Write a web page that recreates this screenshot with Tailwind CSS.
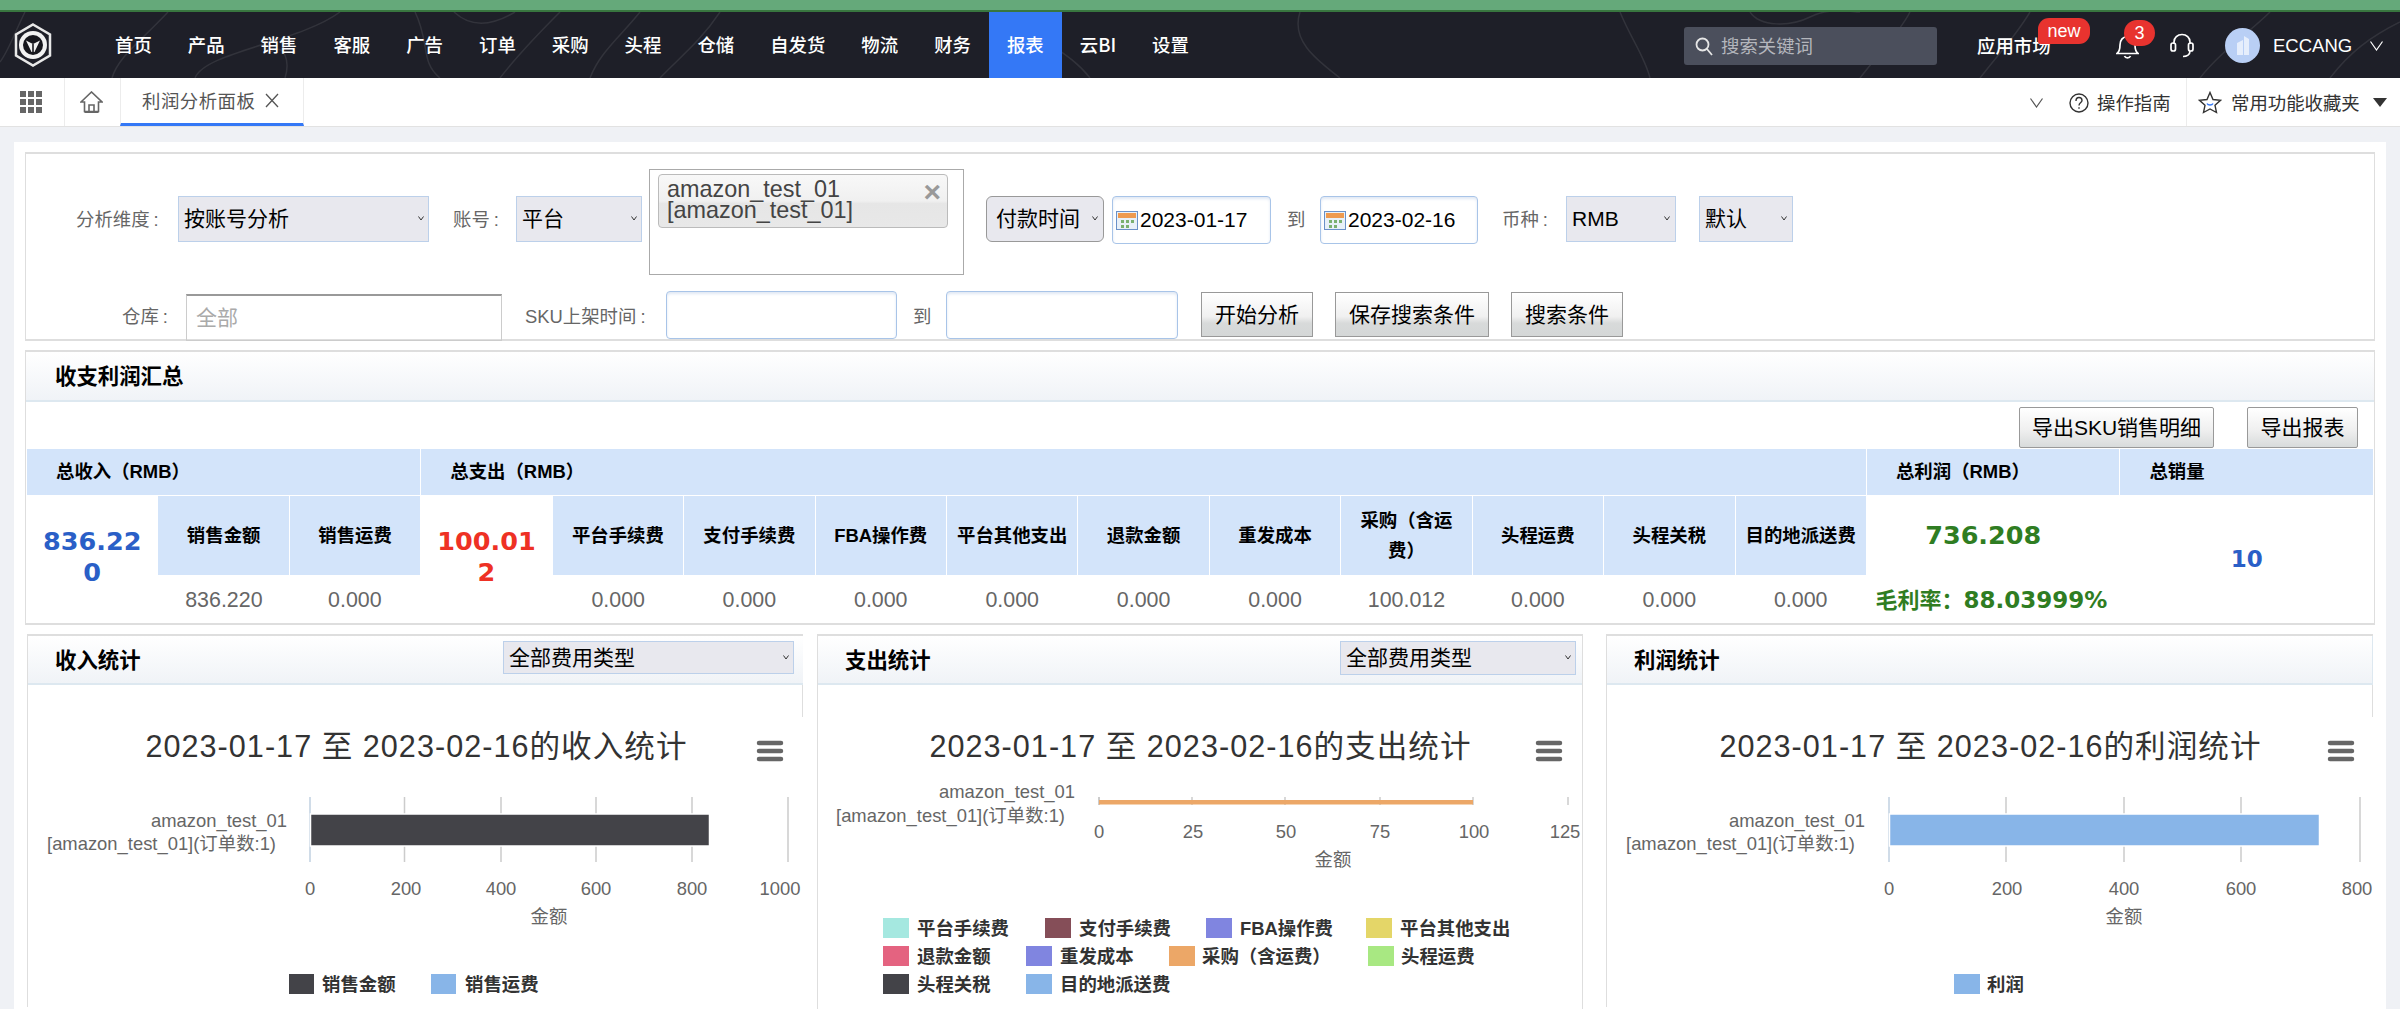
<!DOCTYPE html>
<html lang="zh-CN">
<head>
<meta charset="UTF-8">
<title>利润分析面板</title>
<script src="https://cdn.jsdelivr.net/npm/@tailwindcss/browser@4"></script>
</head>
<body class="w-[2400px] h-[1009px] overflow-hidden bg-[#eff1f5] text-[18.4px] font-['Liberation_Sans','Noto_Sans_CJK_SC',sans-serif]">

<!-- top strip -->
<div class="h-[10px] bg-[#65a97a]"></div>
<div class="h-[2px] bg-[#38763f]"></div>

<!-- main nav -->
<nav class="relative h-[66px] bg-[#1e1f28] flex items-center text-white font-['Noto_Sans_CJK_SC',sans-serif]">
  <svg class="absolute inset-0" width="2400" height="66" fill="none" stroke="#ffffff" stroke-opacity="0.09" stroke-width="1.5">
    <path d="M25 0C15 20 8 40 0 50M168 0C140 30 118 45 112 66M340 0C300 30 205 40 195 66"/>
    <path d="M454 0C470 15 490 15 515 0M560 0C540 20 520 40 500 66M285 66C290 50 285 30 270 40"/>
    <path d="M640 0C620 25 600 40 590 66M720 0C700 30 680 45 660 66M415 0C430 30 420 50 440 66"/>
    <path d="M1010 0C1040 30 1070 40 1090 66M1300 0C1290 30 1320 50 1340 66"/>
    <path d="M1620 0C1630 25 1645 45 1650 66M1750 0C1760 15 1790 15 1810 5C1830 -5 1850 0 1860 0M1860 66C1880 40 1900 20 1910 0M1980 66C2000 40 2015 25 2030 0"/>
    <path d="M2200 66C2220 40 2250 20 2270 0M2330 66C2350 40 2370 25 2400 10"/>
  </svg>
  <svg class="relative ml-[14px] shrink-0" width="38" height="44" viewBox="0 0 38 44">
    <path d="M19 1.5L36 11.5V32.5L19 42.5L2 32.5V11.5Z" fill="none" stroke="#e8e8e8" stroke-width="2.5"/>
    <circle cx="19" cy="22" r="14" fill="#f2f2f2"/>
    <circle cx="19" cy="22" r="10" fill="#17171d"/>
    <path d="M12 17.5L19 21L26 17.5L20.5 29H17.5Z" fill="#f2f2f2"/>
    <path d="M19 21V29" stroke="#17171d" stroke-width="1.6"/>
  </svg>
  <ul class="relative flex ml-[45px] h-full font-medium">
    <li class="px-[18px] flex items-center">首页</li>
    <li class="px-[18px] flex items-center">产品</li>
    <li class="px-[18px] flex items-center">销售</li>
    <li class="px-[18px] flex items-center">客服</li>
    <li class="px-[18px] flex items-center">广告</li>
    <li class="px-[18px] flex items-center">订单</li>
    <li class="px-[18px] flex items-center">采购</li>
    <li class="px-[18px] flex items-center">头程</li>
    <li class="px-[18px] flex items-center">仓储</li>
    <li class="px-[18px] flex items-center">自发货</li>
    <li class="px-[18px] flex items-center">物流</li>
    <li class="px-[18px] flex items-center">财务</li>
    <li class="px-[18px] flex items-center bg-[#3478f6]">报表</li>
    <li class="px-[18px] flex items-center">云BI</li>
    <li class="px-[18px] flex items-center">设置</li>
  </ul>
  <div class="absolute left-[1684px] top-[15px] w-[253px] h-[38px] rounded-[3px] bg-[#4b4f5c] flex items-center pl-[11px] text-[#b4b6bc]">
    <svg width="18" height="19" viewBox="0 0 18 19" fill="none" stroke="#e6e6e6" stroke-width="1.8"><circle cx="7.5" cy="7.5" r="6"/><path d="M12 12L17 18"/></svg>
    <span class="ml-[8px]">搜索关键词</span>
  </div>
  <span class="absolute left-[1977px] top-[20px] font-medium">应用市场</span>
  <span class="absolute left-[2038px] top-[6px] w-[52px] h-[26px] rounded-[11px] rounded-bl-[3px] bg-[#e8332f] flex items-center justify-center text-[18px] font-['Liberation_Sans',sans-serif]">new</span>
  <svg class="absolute left-[2116px] top-[22px]" width="23" height="25" viewBox="0 0 23 25" fill="none" stroke="#fff" stroke-width="1.7"><path d="M1 19.5C3.5 17.5 4 15 4 11C4 6 7 2.5 11.5 2.5S19 6 19 11C19 15 19.5 17.5 22 19.5Z"/><path d="M8.5 22C9.5 24.5 13.5 24.5 14.5 22"/></svg>
  <span class="absolute left-[2124px] top-[8px] w-[31px] h-[26px] rounded-[13px] bg-[#e8332f] flex items-center justify-center text-[18px] font-['Liberation_Sans',sans-serif]">3</span>
  <svg class="absolute left-[2170px] top-[21px]" width="24" height="25" viewBox="0 0 24 25" fill="none" stroke="#fff" stroke-width="1.7"><path d="M4 11V9C4 4.5 7.5 1.5 12 1.5S20 4.5 20 9V11"/><rect x="1" y="10" width="4.5" height="8" rx="2"/><rect x="18.5" y="10" width="4.5" height="8" rx="2"/><path d="M20 18C20 21.5 17 23.5 13 23.5"/></svg>
  <svg class="absolute left-[2225px] top-[16px]" width="35" height="35" viewBox="0 0 35 35"><circle cx="17.5" cy="17.5" r="17.5" fill="#b9cff5"/><path d="M12 27V15L18 12V27ZM19 27V8L24 11V27Z" fill="#e6eefc"/></svg>
  <span class="absolute left-[2273px] top-[20px] font-['Liberation_Sans',sans-serif] text-[18.5px]">ECCANG</span>
  <svg class="absolute left-[2370px] top-[29px]" width="13" height="10" viewBox="0 0 13 10" fill="none" stroke="#fff" stroke-width="1.2"><path d="M0.5 0.5L6.5 9L12.5 0.5"/></svg>
</nav>

<!-- tab bar -->
<div class="relative h-[49px] bg-white border-b border-[#e2e2e2] flex text-[#555] font-['Noto_Sans_CJK_SC',sans-serif]">
  <div class="w-[65px] border-r border-[#ececec] flex items-center pl-[20px]">
    <div class="grid grid-cols-3 gap-[2.5px] w-[22px]">
      <i class="h-[5.5px] bg-[#666]"></i><i class="h-[5.5px] bg-[#666]"></i><i class="h-[5.5px] bg-[#666]"></i>
      <i class="h-[5.5px] bg-[#666]"></i><i class="h-[5.5px] bg-[#666]"></i><i class="h-[5.5px] bg-[#666]"></i>
      <i class="h-[5.5px] bg-[#666]"></i><i class="h-[5.5px] bg-[#666]"></i><i class="h-[5.5px] bg-[#666]"></i>
    </div>
  </div>
  <div class="w-[55px] flex items-center pl-[15px]">
    <svg width="23" height="22" viewBox="0 0 23 22" fill="none" stroke="#666" stroke-width="1.6"><path d="M1 11L11.5 1L22 11H18.5V20.5H4.5V11Z"/><path d="M9 20.5V14H14V20.5"/><path d="M4.5 21H18.5" stroke-width="2"/></svg>
  </div>
  <div class="w-[184px] h-[48px] border-x border-[#ececec] border-b-[3px] border-b-[#3478f6] flex items-center pl-[21px] tracking-[0.5px]">
    利润分析面板
    <svg class="ml-[10px]" width="14" height="15" viewBox="0 0 14 15" fill="none" stroke="#555" stroke-width="1.3"><path d="M1 1L13 14M13 1L1 14"/></svg>
  </div>
  <svg class="absolute left-[2030px] top-[20px]" width="13" height="10" viewBox="0 0 13 10" fill="none" stroke="#555" stroke-width="1.2"><path d="M0.5 0.5L6.5 9L12.5 0.5"/></svg>
  <svg class="absolute left-[2069px] top-[15px]" width="20" height="20" viewBox="0 0 20 20" fill="none" stroke="#333" stroke-width="1.4"><circle cx="10" cy="10" r="9"/><path d="M7 8C7 5.5 8.5 4.5 10 4.5S13 5.5 13 7.5C13 9.5 10 9.5 10 12.5"/><path d="M10 14.2V15.8"/></svg>
  <span class="absolute left-[2097px] top-[11px] text-[#333]">操作指南</span>
  <div class="absolute left-[2186px] top-0 h-[48px] border-l border-[#ececec]"></div>
  <svg class="absolute left-[2198px] top-[13px]" width="24" height="23" viewBox="0 0 24 23" fill="none" stroke="#333" stroke-width="1.4"><path d="M12 1.5L15 8.5L22.5 9.3L17 14.3L18.5 21.5L12 18L5.5 21.5L7 14.3L1.5 9.3L9 8.5Z"/><path d="M9 12.5C10 14.5 14 14.5 15 12.5" stroke="#3478f6"/></svg>
  <span class="absolute left-[2231px] top-[11px] text-[#333]">常用功能收藏夹</span>
  <span class="absolute left-[2373px] top-[20px] w-0 h-0 border-x-[7px] border-x-transparent border-t-[9px] border-t-[#333]"></span>
</div>

<!-- page body -->
<main class="mt-[15px] ml-[14px] w-[2372px] h-[867px] bg-white px-[11px] pt-[10px]">

  <!-- search form -->
  <section class="h-[189px] border-y-2 border-x border-[#dedede] text-[#666]">
    <div class="h-[137px] flex items-start">
      <label class="mt-[43px] ml-[50px] w-[83px] h-[46px] leading-[46px] whitespace-nowrap">分析维度<span class="ml-[4px]">:</span></label>
      <div class="relative mt-[42px] ml-[19px] w-[251px] h-[46px]">
        <select class="appearance-none w-full h-full pl-[5px] border border-[#bcd0ea] bg-[#e8e8ee] text-black text-[21px]"><option>按账号分析</option></select>
        <svg class="absolute right-[5px] top-[20px]" width="6" height="5" viewBox="0 0 6 5" fill="none" stroke="#333"><path d="M0.5 0.5L3 4L5.5 0.5"/></svg>
      </div>
      <label class="mt-[43px] ml-[24px] w-[47px] h-[46px] leading-[46px] whitespace-nowrap">账号<span class="ml-[4px]">:</span></label>
      <div class="relative mt-[42px] ml-[16px] w-[126px] h-[46px]">
        <select class="appearance-none w-full h-full pl-[5px] border border-[#bcd0ea] bg-[#e8e8ee] text-black text-[21px]"><option>平台</option></select>
        <svg class="absolute right-[5px] top-[20px]" width="6" height="5" viewBox="0 0 6 5" fill="none" stroke="#333"><path d="M0.5 0.5L3 4L5.5 0.5"/></svg>
      </div>
      <div class="mt-[15px] ml-[7px] w-[315px] h-[106px] border border-[#aaa] pl-[8px] pt-[4px]">
        <div class="relative w-[290px] h-[54px] border border-[#bbb] rounded-[4px] bg-[linear-gradient(#f8f8f8,#f0f0f0_50%,#e6e6e6_55%,#e8e8e8)] pl-[8px] pt-[4px] text-[23.4px] leading-[21px] text-[#444]">
          amazon_test_01<br>[amazon_test_01]
          <span class="absolute right-[6px] top-[7px] text-[30px] leading-[20px] font-bold text-[#999]">×</span>
        </div>
      </div>
      <div class="relative mt-[42px] ml-[22px] w-[118px] h-[46px]">
        <select class="appearance-none w-full h-full pl-[9px] border border-[#999] rounded-[6px] bg-[#e8e8ee] text-black text-[21px]"><option>付款时间</option></select>
        <svg class="absolute right-[6px] top-[20px]" width="6" height="5" viewBox="0 0 6 5" fill="none" stroke="#333"><path d="M0.5 0.5L3 4L5.5 0.5"/></svg>
      </div>
      <div class="mt-[42px] ml-[8px] w-[159px] h-[48px] border border-[#a8c4e8] rounded-[4px] flex items-center pl-[3px] text-black text-[21px] shadow-[inset_0_2px_3px_#e0e8f4]">
        <svg class="shrink-0" width="22" height="19" viewBox="0 0 22 19"><rect x="0.5" y="0.5" width="21" height="18" fill="#e8f0f8" stroke="#6a90c8"/><rect x="2" y="2" width="18" height="5" fill="#ee9a50"/><path d="M5 9h3v3H5zM10 9h3v3h-3zM15 9h3v3h-3zM5 14h3v3H5zM10 14h3v3h-3z" fill="#7ab070"/></svg>
        <span class="ml-[2px]">2023-01-17</span>
      </div>
      <label class="mt-[43px] ml-[16px] w-[33px] h-[46px] leading-[46px]">到</label>
      <div class="mt-[42px] w-[158px] h-[48px] border border-[#a8c4e8] rounded-[4px] flex items-center pl-[3px] text-black text-[21px] shadow-[inset_0_2px_3px_#e0e8f4]">
        <svg class="shrink-0" width="22" height="19" viewBox="0 0 22 19"><rect x="0.5" y="0.5" width="21" height="18" fill="#e8f0f8" stroke="#6a90c8"/><rect x="2" y="2" width="18" height="5" fill="#ee9a50"/><path d="M5 9h3v3H5zM10 9h3v3h-3zM15 9h3v3h-3zM5 14h3v3H5zM10 14h3v3h-3z" fill="#7ab070"/></svg>
        <span class="ml-[2px]">2023-02-16</span>
      </div>
      <label class="mt-[43px] ml-[24px] w-[64px] h-[46px] leading-[46px] whitespace-nowrap">币种<span class="ml-[4px]">:</span></label>
      <div class="relative mt-[42px] w-[110px] h-[46px]">
        <select class="appearance-none w-full h-full pl-[5px] border border-[#bcd0ea] bg-[#e8e8ee] text-black text-[21px]"><option>RMB</option></select>
        <svg class="absolute right-[6px] top-[20px]" width="6" height="5" viewBox="0 0 6 5" fill="none" stroke="#333"><path d="M0.5 0.5L3 4L5.5 0.5"/></svg>
      </div>
      <div class="relative mt-[42px] ml-[23px] w-[94px] h-[46px]">
        <select class="appearance-none w-full h-full pl-[5px] border border-[#bcd0ea] bg-[#e8e8ee] text-black text-[21px]"><option>默认</option></select>
        <svg class="absolute right-[6px] top-[20px]" width="6" height="5" viewBox="0 0 6 5" fill="none" stroke="#333"><path d="M0.5 0.5L3 4L5.5 0.5"/></svg>
      </div>
    </div>
    <div class="flex items-start h-[50px]">
      <label class="mt-[3px] ml-[96px] w-[49px] h-[46px] leading-[46px] whitespace-nowrap">仓库<span class="ml-[4px]">:</span></label>
      <input class="mt-[3px] ml-[15px] w-[316px] h-[47px] border border-[#ccc] border-t-2 border-t-[#999] pl-[9px] text-[21px] placeholder:text-[#aaa] relative" placeholder="全部">
      <label class="mt-[3px] ml-[23px] w-[130px] h-[46px] leading-[46px] whitespace-nowrap">SKU上架时间<span class="ml-[4px]">:</span></label>
      <input class="ml-[11px] w-[231px] h-[48px] border border-[#a8c4e8] rounded-[4px] shadow-[inset_0_2px_3px_#e0e8f4]">
      <label class="mt-[3px] ml-[16px] w-[33px] h-[46px] leading-[46px]">到</label>
      <input class="w-[232px] h-[48px] border border-[#a8c4e8] rounded-[4px] shadow-[inset_0_2px_3px_#e0e8f4]">
      <button class="mt-[1px] ml-[23px] w-[112px] h-[45px] border border-[#999] bg-[linear-gradient(#fff,#f0f0f0_55%,#d8dada_70%,#d4d7d7)] text-black text-[21px]">开始分析</button>
      <button class="mt-[1px] ml-[22px] w-[154px] h-[45px] border border-[#999] bg-[linear-gradient(#fff,#f0f0f0_55%,#d8dada_70%,#d4d7d7)] text-black text-[21px]">保存搜索条件</button>
      <button class="mt-[1px] ml-[22px] w-[112px] h-[45px] border border-[#999] bg-[linear-gradient(#fff,#f0f0f0_55%,#d8dada_70%,#d4d7d7)] text-black text-[21px]">搜索条件</button>
    </div>
  </section>

  <!-- income / expense summary -->
  <section class="mt-[9px] h-[275px] border-y-2 border-x border-[#dedede]">
    <h2 class="h-[50px] pl-[29px] pt-[2px] flex items-center border-b-2 border-[#dde8f0] bg-[linear-gradient(#fff,#f0f3f7)] text-[21.4px] font-bold text-black">收支利润汇总</h2>
    <div class="h-[46px] flex justify-end items-start pt-[5px] pr-[16px] gap-[33px]">
      <button class="w-[195px] h-[41px] border border-[#999] rounded-[2px] bg-[linear-gradient(#fff,#f0f0f0_55%,#d8dbdb)] text-[21px] text-black">导出SKU销售明细</button>
      <button class="w-[111px] h-[41px] border border-[#999] rounded-[2px] bg-[linear-gradient(#fff,#f0f0f0_55%,#d8dbdb)] text-[21px] text-black">导出报表</button>
    </div>
    <table class="table-fixed w-[2347px] border-collapse text-center">
      <colgroup>
        <col class="w-[131.43px]"><col class="w-[131.43px]"><col class="w-[131.43px]"><col class="w-[131.43px]"><col class="w-[131.43px]"><col class="w-[131.43px]"><col class="w-[131.43px]">
        <col class="w-[131.43px]"><col class="w-[131.43px]"><col class="w-[131.43px]"><col class="w-[131.43px]"><col class="w-[131.43px]"><col class="w-[131.43px]"><col class="w-[131.43px]">
        <col class="w-[253.5px]"><col class="w-[253.5px]">
      </colgroup>
      <tr class="h-[47px] bg-[#d3e4fa]">
        <th colspan="3" class="border border-white text-left pl-[29px] font-bold">总收入（RMB）</th>
        <th colspan="11" class="border border-white text-left pl-[29px] font-bold">总支出（RMB）</th>
        <th class="border border-white text-left pl-[29px] font-bold">总利润（RMB）</th>
        <th class="border border-white text-left pl-[29px] font-bold">总销量</th>
      </tr>
      <tr class="h-[80px]">
        <td rowspan="2" class="border border-white px-[8px] pb-[4px] break-all leading-[31px] text-[25.5px] font-bold text-[#2a5fc7] font-['DejaVu_Sans',sans-serif]">836.220</td>
        <th class="border border-white bg-[#d3e4fa] font-bold">销售金额</th>
        <th class="border border-white bg-[#d3e4fa] font-bold">销售运费</th>
        <td rowspan="2" class="border border-white px-[8px] pb-[4px] break-all leading-[31px] text-[25.5px] font-bold text-[#ee3124] font-['DejaVu_Sans',sans-serif]">100.012</td>
        <th class="border border-white bg-[#d3e4fa] font-bold">平台手续费</th>
        <th class="border border-white bg-[#d3e4fa] font-bold">支付手续费</th>
        <th class="border border-white bg-[#d3e4fa] font-bold">FBA操作费</th>
        <th class="border border-white bg-[#d3e4fa] font-bold">平台其他支出</th>
        <th class="border border-white bg-[#d3e4fa] font-bold">退款金额</th>
        <th class="border border-white bg-[#d3e4fa] font-bold">重发成本</th>
        <th class="border border-white bg-[#d3e4fa] font-bold px-[6px] leading-[30px]">采购（含运费）</th>
        <th class="border border-white bg-[#d3e4fa] font-bold">头程运费</th>
        <th class="border border-white bg-[#d3e4fa] font-bold">头程关税</th>
        <th class="border border-white bg-[#d3e4fa] font-bold">目的地派送费</th>
        <td class="border border-white pr-[20px] text-[25.5px] font-bold text-[#2f7d22] font-['DejaVu_Sans',sans-serif]">736.208</td>
        <td rowspan="2" class="border border-white text-[23px] font-bold text-[#2a5fc7] font-['DejaVu_Sans',sans-serif]">10</td>
      </tr>
      <tr class="h-[47px] text-[21.4px] text-[#666] [&>td]:pt-[2px]">
        <td>836.220</td><td>0.000</td>
        <td>0.000</td><td>0.000</td><td>0.000</td><td>0.000</td><td>0.000</td><td>0.000</td><td>100.012</td><td>0.000</td><td>0.000</td><td>0.000</td>
        <td class="text-left pl-[9px] text-[22px] font-bold text-[#2f7d22] whitespace-nowrap">毛利率：<span class="text-[23px] font-['DejaVu_Sans',sans-serif]">88.03999%</span></td>
      </tr>
    </table>
  </section>

  <!-- chart panels -->
  <div class="mt-[9px] flex items-start">
    <section class="ml-[2px] w-[776px] border-t-2 border-l border-[#dedede]">
      <div class="h-[49px] flex items-start justify-between pl-[27px] pr-[9px] border-b-2 border-[#dde8f0] bg-[linear-gradient(#fff,#f0f3f7)]">
        <h3 class="mt-[9px] text-[21.4px] font-bold">收入统计</h3>
        <div class="relative mt-[5px] w-[291px] h-[33px]">
          <select class="appearance-none w-full h-full pl-[5px] border border-[#bcd0ea] bg-[#e8e8ee] text-[21px]"><option>全部费用类型</option></select>
          <svg class="absolute right-[5px] top-[14px]" width="6" height="5" viewBox="0 0 6 5" fill="none" stroke="#333"><path d="M0.5 0.5L3 4L5.5 0.5"/></svg>
        </div>
      </div>
      <div class="h-[32px] border-r border-[#dedede]"></div>
      <svg class="block" width="775" height="290" viewBox="28 719 775 290">
        <g dominant-baseline="central" text-anchor="middle" class="text-[18.4px] fill-[#666]">
          <text x="416" y="748" textLength="541" class="text-[30.6px] fill-[#333]">2023-01-17 至 2023-02-16的收入统计</text>
          <path d="M759 745H781M759 753H781M759 761H781" stroke="#666" stroke-width="4.5" stroke-linecap="round"/>
          <path d="M404.5 799V864M501 799V864M596 799V864M692 799V864M788 799V864" stroke="#ccc" stroke-width="1.5"/>
          <path d="M310 799V864" stroke="#c0d0e0" stroke-width="1.5"/>
          <rect x="310.5" y="816" width="399" height="32" fill="#434348" stroke="#fff" stroke-width="1.5"/>
          <text x="287" y="822" text-anchor="end">amazon_test_01</text>
          <text x="276" y="845" text-anchor="end">[amazon_test_01](订单数:1)</text>
          <text x="310" y="890">0</text><text x="406" y="890">200</text><text x="501" y="890">400</text><text x="596" y="890">600</text><text x="692" y="890">800</text><text x="780" y="890">1000</text>
          <text x="549" y="918">金额</text>
          <rect x="289" y="976" width="25" height="20" fill="#434348"/>
          <text x="322" y="986" text-anchor="start" class="font-bold fill-[#333]">销售金额</text>
          <rect x="431" y="976" width="25" height="20" fill="#88b5e8"/>
          <text x="465" y="986" text-anchor="start" class="font-bold fill-[#333]">销售运费</text>
        </g>
      </svg>
    </section>

    <section class="ml-[14px] w-[766px] h-[400px] border-t-2 border-x border-[#dedede]">
      <div class="h-[49px] flex items-start justify-between pl-[27px] pr-[6px] border-b-2 border-[#dde8f0] bg-[linear-gradient(#fff,#f0f3f7)]">
        <h3 class="mt-[9px] text-[21.4px] font-bold">支出统计</h3>
        <div class="relative mt-[5px] w-[236px] h-[34px]">
          <select class="appearance-none w-full h-full pl-[5px] border border-[#bcd0ea] bg-[#e8e8ee] text-[21px]"><option>全部费用类型</option></select>
          <svg class="absolute right-[5px] top-[14px]" width="6" height="5" viewBox="0 0 6 5" fill="none" stroke="#333"><path d="M0.5 0.5L3 4L5.5 0.5"/></svg>
        </div>
      </div>
      <svg class="block mt-[32px]" width="764" height="290" viewBox="818 719 764 290">
        <g dominant-baseline="central" text-anchor="middle" class="text-[18.4px] fill-[#666]">
          <text x="1200" y="748" textLength="541" class="text-[30.6px] fill-[#333]">2023-01-17 至 2023-02-16的支出统计</text>
          <path d="M1538 745H1560M1538 753H1560M1538 761H1560" stroke="#666" stroke-width="4.5" stroke-linecap="round"/>
          <path d="M1192 799V807M1285 799V807M1380 799V807M1473 799V807M1568 799V807" stroke="#ccc" stroke-width="1.5"/>
          <path d="M1099 799V807" stroke="#bbb" stroke-width="1.5"/>
          <rect x="1099" y="802" width="374" height="4.5" fill="#eca767"/>
          <text x="1075" y="793" text-anchor="end">amazon_test_01</text>
          <text x="1065" y="817" text-anchor="end">[amazon_test_01](订单数:1)</text>
          <text x="1099" y="833">0</text><text x="1193" y="833">25</text><text x="1286" y="833">50</text><text x="1380" y="833">75</text><text x="1474" y="833">100</text><text x="1565" y="833">125</text>
          <text x="1333" y="861">金额</text>
          <g text-anchor="start" class="font-bold fill-[#333]">
            <rect x="883" y="920" width="26" height="20" fill="#a5e8e0"/><text x="917" y="930">平台手续费</text>
            <rect x="1045" y="920" width="26" height="20" fill="#854e58"/><text x="1079" y="930">支付手续费</text>
            <rect x="1206" y="920" width="26" height="20" fill="#8085e0"/><text x="1240" y="930">FBA操作费</text>
            <rect x="1366" y="920" width="26" height="20" fill="#e4d668"/><text x="1400" y="930">平台其他支出</text>
            <rect x="883" y="948" width="26" height="20" fill="#e46380"/><text x="917" y="958">退款金额</text>
            <rect x="1026" y="948" width="26" height="20" fill="#8085e0"/><text x="1060" y="958">重发成本</text>
            <rect x="1169" y="948" width="26" height="20" fill="#eca767"/><text x="1202" y="958">采购（含运费）</text>
            <rect x="1368" y="948" width="26" height="20" fill="#a8e882"/><text x="1401" y="958">头程运费</text>
            <rect x="883" y="976" width="26" height="20" fill="#434348"/><text x="917" y="986">头程关税</text>
            <rect x="1026" y="976" width="26" height="20" fill="#88b5e8"/><text x="1060" y="986">目的地派送费</text>
          </g>
        </g>
      </svg>
    </section>

    <section class="ml-[23px] w-[767px] border-t-2 border-l border-[#dedede]">
      <div class="h-[49px] pl-[27px] border-b-2 border-r border-[#dde8f0] bg-[linear-gradient(#fff,#f0f3f7)]">
        <h3 class="pt-[9px] text-[21.4px] font-bold">利润统计</h3>
      </div>
      <div class="h-[32px] border-r border-[#dedede]"></div>
      <svg class="block" width="766" height="290" viewBox="1607 719 766 290">
        <g dominant-baseline="central" text-anchor="middle" class="text-[18.4px] fill-[#666]">
          <text x="1990" y="748" textLength="541" class="text-[30.6px] fill-[#333]">2023-01-17 至 2023-02-16的利润统计</text>
          <path d="M2330 745H2352M2330 753H2352M2330 761H2352" stroke="#666" stroke-width="4.5" stroke-linecap="round"/>
          <path d="M2006 799V864M2124 799V864M2241 799V864M2360 799V864" stroke="#ccc" stroke-width="1.5"/>
          <path d="M1889 799V864" stroke="#c0d0e0" stroke-width="1.5"/>
          <rect x="1889.5" y="816" width="430" height="32" fill="#88b5e8" stroke="#fff" stroke-width="1.5"/>
          <text x="1865" y="822" text-anchor="end">amazon_test_01</text>
          <text x="1855" y="845" text-anchor="end">[amazon_test_01](订单数:1)</text>
          <text x="1889" y="890">0</text><text x="2007" y="890">200</text><text x="2124" y="890">400</text><text x="2241" y="890">600</text><text x="2357" y="890">800</text>
          <text x="2124" y="918">金额</text>
          <rect x="1954" y="976" width="26" height="20" fill="#88b5e8"/>
          <text x="1987" y="986" text-anchor="start" class="font-bold fill-[#333]">利润</text>
        </g>
      </svg>
    </section>
  </div>
</main>
</body>
</html>
